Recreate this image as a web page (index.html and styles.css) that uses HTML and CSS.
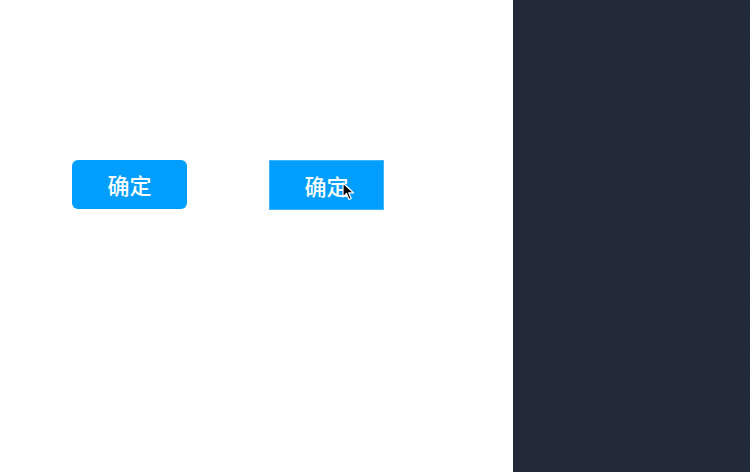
FILE: index.html
```html
<!DOCTYPE html>
<html lang="zh">
<head>
<meta charset="utf-8">
<link rel="stylesheet" href="styles.css">
</head>
<body>
<div class="page">
  <main class="stage">
    <div class="row">
      <button class="btn btn-round">确定</button>
      <button class="btn btn-square">确定
        <svg class="cursor" width="13" height="19" viewBox="0 0 13 19"><path d="M1 1 L1 15 L4.5 11.5 L7 17.5 L9.2 16.5 L6.8 10.8 L11.5 10.8 Z" fill="#000" stroke="#fff" stroke-width="1.2" stroke-linejoin="round"/></svg>
      </button>
    </div>
  </main>
  <aside class="panel"></aside>
</div>
</body>
</html>
```
FILE: styles.css
```css
html, body {
  margin: 0;
  padding: 0;
  background: #fff;
}
.page {
  display: flex;
  width: 750px;
  height: 472px;
}
.stage {
  width: 513px;
  background: #fff;
}
.row {
  display: flex;
  gap: 82px;
  padding: 160px 0 0 72px;
}
.btn {
  position: relative;
  width: 115px;
  height: 49px;
  border: none;
  background: #009eff;
  color: #fff;
  font-family: "Noto Sans CJK SC", "Noto Sans", sans-serif;
  font-size: 22px;
  font-weight: 500;
  line-height: 47px;
  padding: 0;
  text-align: center;
}
.btn-round {
  border-radius: 6px;
}
.btn-square {
  border-radius: 0;
  height: 50px;
  box-shadow: inset 0 0 0 1px #3fb4ff;
}
.cursor {
  position: absolute;
  left: 73px;
  top: 22px;
}
.panel {
  flex: 1;
  background-color: #232b3b;
  background-image: radial-gradient(circle, #1c2331 0.8px, transparent 1px);
  background-size: 3px 3px;
}
```
